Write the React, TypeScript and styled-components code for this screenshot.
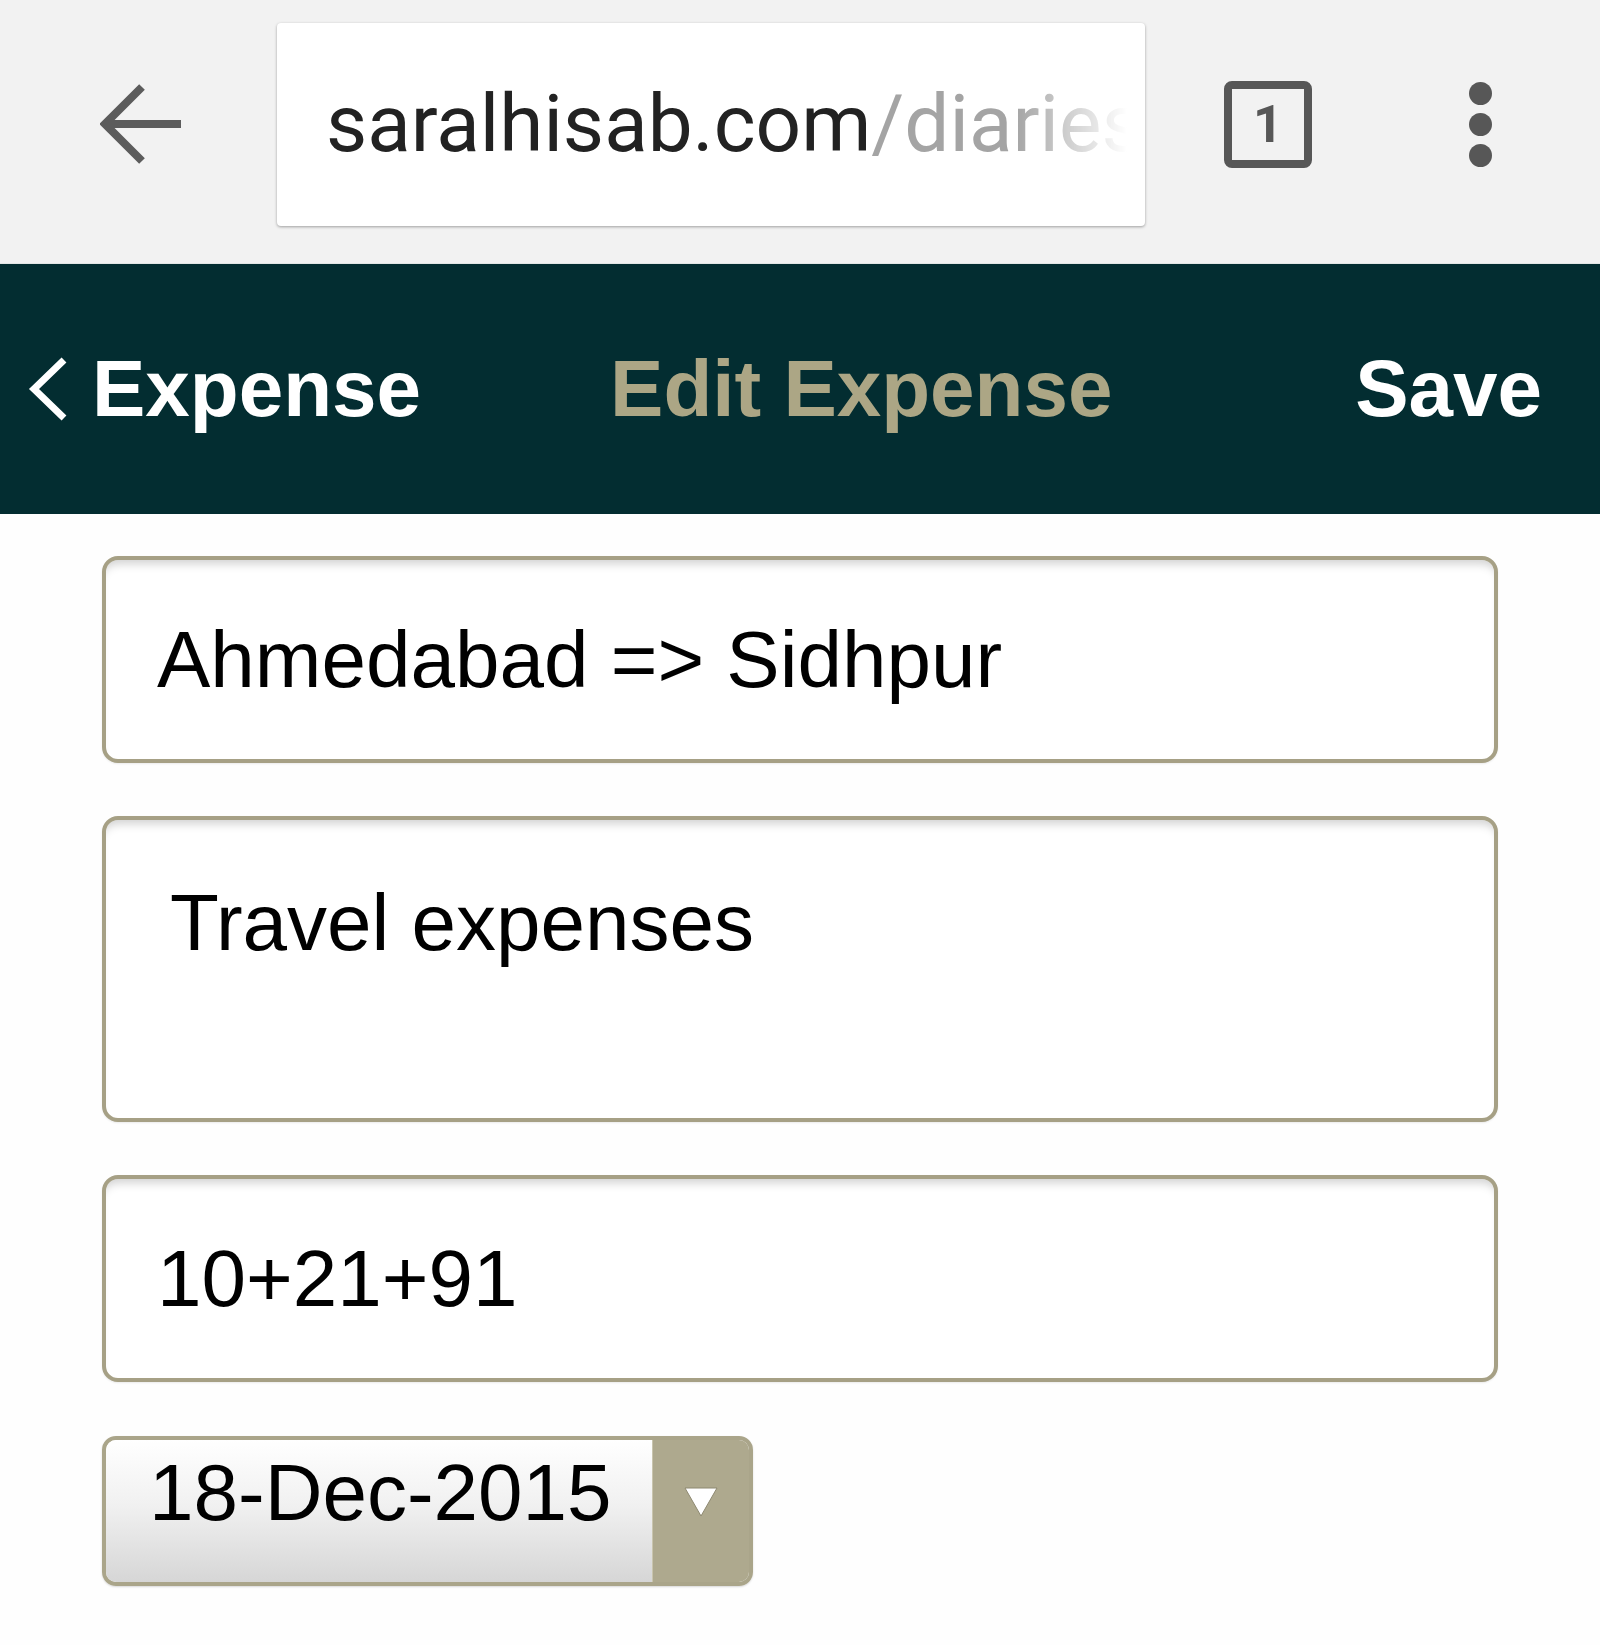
import * as React from 'react';
import styled, { createGlobalStyle } from 'styled-components';

const GlobalStyle = createGlobalStyle`
  html, body {
    margin: 0;
    padding: 0;
    background: #fefefe;
  }
  * {
    box-sizing: border-box;
  }
`;

const Page = styled.div`
  width: 1600px;
  min-height: 1645px;
  background: #fefefe;
  font-family: 'Liberation Sans', Arial, sans-serif;
`;

/* browser chrome */

const BrowserBar = styled.div`
  display: flex;
  align-items: center;
  height: 264px;
  padding: 23px 0 38px 100px;
  background: #f2f2f2;
  border-bottom: 1px solid #e2e6e6;
`;

const UrlBox = styled.div`
  display: flex;
  align-items: center;
  width: 868px;
  height: 203px;
  margin-left: 95px;
  padding: 0 18px 0 49px;
  background: #fff;
  border-radius: 4px;
  box-shadow: 0 1px 3px rgba(0, 0, 0, 0.35);
  overflow: hidden;
`;

const UrlText = styled.div`
  flex: 1;
  white-space: nowrap;
  overflow: hidden;
  font-family: Roboto, 'Liberation Sans', sans-serif;
  font-size: 80px;
  color: #222;
  -webkit-mask-image: linear-gradient(to right, #000 86%, transparent 100%);
  mask-image: linear-gradient(to right, #000 86%, transparent 100%);
`;

const UrlPath = styled.span`
  color: #a4a4a4;
`;

const TabCount = styled.div`
  display: flex;
  align-items: center;
  justify-content: center;
  width: 88px;
  height: 87px;
  margin-left: 79px;
  border: 8px solid #575757;
  border-radius: 8px;
  font-family: Roboto, 'Liberation Sans', sans-serif;
  font-weight: 700;
  font-size: 52px;
  color: #575757;
`;

const Kebab = styled.div`
  display: flex;
  flex-direction: column;
  gap: 8px;
  margin-left: 157px;
`;

const Dot = styled.span`
  width: 23px;
  height: 23px;
  border-radius: 50%;
  background: #575757;
`;

/* app header */

const Header = styled.div`
  display: flex;
  align-items: center;
  height: 250px;
  padding: 0 58px 0 28px;
  background: #032d31;
  font-weight: bold;
  font-size: 80px;
`;

const BackLink = styled.div`
  display: flex;
  align-items: center;
  gap: 24px;
  color: #fff;
`;

const Title = styled.div`
  margin-left: 189px;
  color: #aca685;
`;

const SaveButton = styled.div`
  margin-left: auto;
  color: #fff;
`;

/* form */

const Form = styled.div`
  display: flex;
  flex-direction: column;
  align-items: flex-start;
  gap: 53px;
  padding: 42px 102px 0;
`;

const Field = styled.div<{ $tall?: boolean }>`
  display: flex;
  align-items: ${(p) => (p.$tall ? 'flex-start' : 'center')};
  width: 100%;
  height: ${(p) => (p.$tall ? '306px' : '207px')};
  padding: ${(p) => (p.$tall ? '57px 0 0 64px' : '0 0 0 51px')};
  background: #fff;
  border: 4px solid #a6a085;
  border-radius: 16px;
  box-shadow: inset 0 10px 10px -6px rgba(0, 0, 0, 0.18), 0 1px 2px rgba(0, 0, 0, 0.08);
  font-size: 80px;
  line-height: 92px;
  color: #000;
`;

const DateSelect = styled.div`
  display: flex;
  width: 651px;
  height: 150px;
  margin-top: 1px;
  border: 4px solid #aaa58a;
  border-radius: 14px;
  overflow: hidden;
  box-shadow: 0 1px 2px rgba(0, 0, 0, 0.15);
`;

const DateValue = styled.div`
  flex: 1;
  padding: 7px 0 0 43px;
  background: linear-gradient(to bottom, #ffffff 0%, #f1f1f1 45%, #d6d6d6 100%);
  font-size: 80px;
  line-height: 92px;
  color: #000;
`;

const DateArrow = styled.div`
  display: flex;
  align-items: flex-start;
  justify-content: center;
  width: 97px;
  padding-top: 47px;
  background: #aea98e;
  border-left: 1px solid #c9c5ae;
`;

const BackArrow = () => (
  <svg width="82" height="82" viewBox="0 0 82 82">
    <path
      d="M81 41H6 M42 4 L5 41 L42 78"
      fill="none"
      stroke="#5c5c5c"
      strokeWidth="8"
      strokeLinecap="butt"
      strokeLinejoin="miter"
    />
  </svg>
);

const Chevron = () => (
  <svg width="40" height="64" viewBox="0 0 40 64">
    <path d="M36 3 L6 32 L36 61" fill="none" stroke="#fff" strokeWidth="7" />
  </svg>
);

const Triangle = () => (
  <svg width="34" height="30" viewBox="0 0 34 30">
    <path d="M1 1 H33 L17 29 Z" fill="#fff" stroke="#8d8870" strokeWidth="1" />
  </svg>
);

export default function App() {
  return (
    <Page>
      <GlobalStyle />
      <BrowserBar>
        <BackArrow />
        <UrlBox>
          <UrlText>
            saralhisab.com<UrlPath>/diaries</UrlPath>
          </UrlText>
        </UrlBox>
        <TabCount>1</TabCount>
        <Kebab>
          <Dot />
          <Dot />
          <Dot />
        </Kebab>
      </BrowserBar>
      <Header>
        <BackLink>
          <Chevron />
          Expense
        </BackLink>
        <Title>Edit Expense</Title>
        <SaveButton>Save</SaveButton>
      </Header>
      <Form>
        <Field>Ahmedabad =&gt; Sidhpur</Field>
        <Field $tall>Travel expenses</Field>
        <Field>10+21+91</Field>
        <DateSelect>
          <DateValue>18-Dec-2015</DateValue>
          <DateArrow>
            <Triangle />
          </DateArrow>
        </DateSelect>
      </Form>
    </Page>
  );
}
